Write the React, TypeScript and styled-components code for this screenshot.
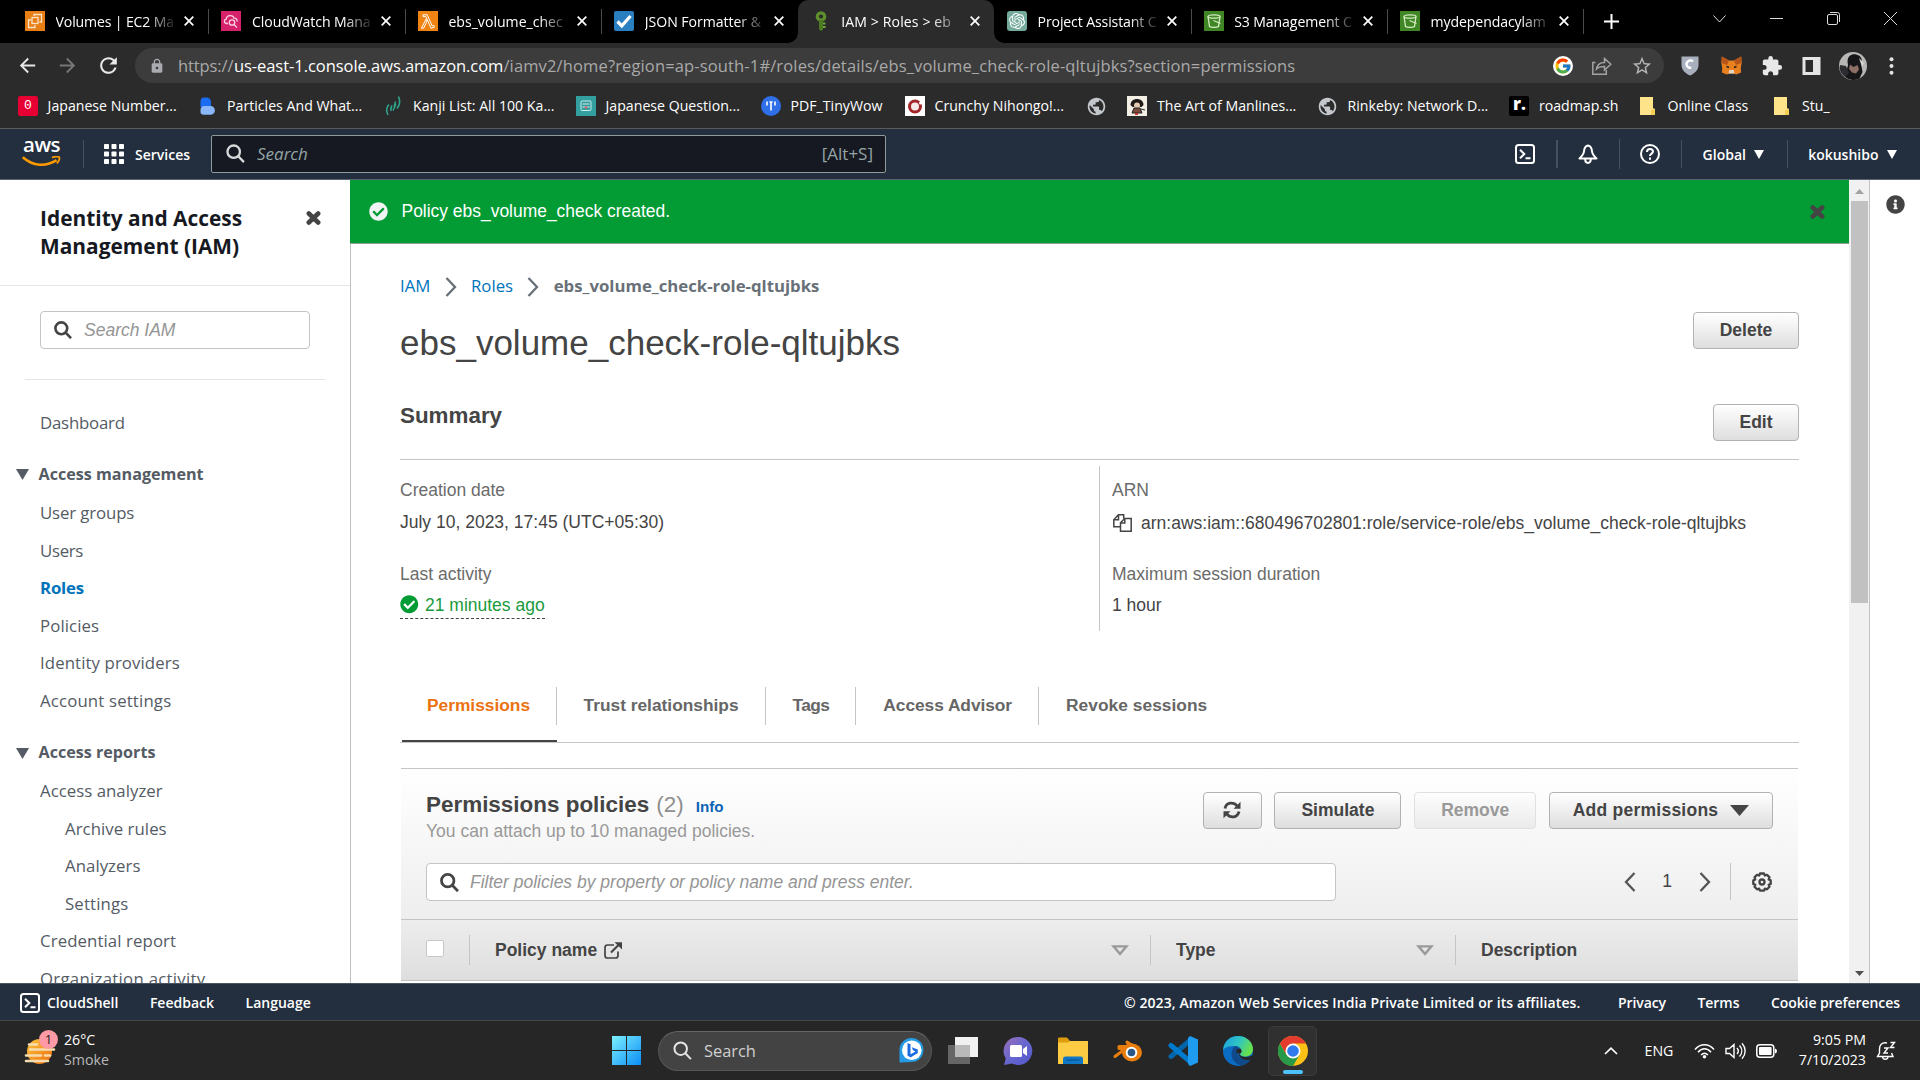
import React from 'react';
import styled, { createGlobalStyle, css } from 'styled-components';
import { FcGoogle } from 'react-icons/fc';
import { SiOpenai } from 'react-icons/si';
import { MdLock, MdArrowBack, MdArrowForward, MdRefresh, MdStarBorder, MdExtension, MdPublic } from 'react-icons/md';
import { FaCheckCircle, FaInfoCircle } from 'react-icons/fa';

const ui = '"Open Sans", "Noto Sans", sans-serif';
const arial = '"Liberation Sans", Arial, sans-serif';

const Global = createGlobalStyle`
  * { box-sizing: border-box; }
  body { margin: 0; background: #fff; overflow: hidden; }
  svg { display: block; flex: none; }
  h1, h2, p { margin: 0; }
`;

const Screen = styled.div`
  width: 1920px;
  height: 1080px;
  display: flex;
  flex-direction: column;
  overflow: hidden;
  font-family: ${ui};
  white-space: nowrap;
`;

/* ---------- Browser chrome ---------- */
const TabStrip = styled.div`
  height: 43px;
  flex: none;
  background: #000;
  display: flex;
  padding-left: 12px;
`;
const Tab = styled.div<{ $active?: boolean; $line?: boolean }>`
  position: relative;
  width: 196.43px;
  height: 43px;
  display: flex;
  align-items: center;
  padding: 0 14px 1px 13px;
  color: #fff;
  font-size: 14.1px;
  ${(p) => p.$line && css`
    &::after { content: ''; position: absolute; right: -1px; top: 9px; width: 1px; height: 25px; background: #4b4b4b; }
  `}
  ${(p) => p.$active && css`
    background: #2b2b2b;
    border-radius: 10px 10px 0 0;
    &::before, &::after { content: ''; position: absolute; bottom: 0; width: 10px; height: 10px; }
    &::before { left: -10px; background: radial-gradient(circle at 0 0, #000 9.5px, #2b2b2b 10px); }
    &::after { right: -10px; background: radial-gradient(circle at 100% 0, #000 9.5px, #2b2b2b 10px); }
  `}
`;
const TabTitle = styled.span<{ $track: number }>`
  width: 119px;
  margin: 0 10px 0 10.6px;
  letter-spacing: ${(p) => p.$track}px;
  mask-image: linear-gradient(90deg, #000 calc(100% - 28px), rgba(0, 0, 0, 0.12) 100%);
`;
const NewTab = styled.div`
  width: 56px;
  display: flex;
  align-items: center;
  justify-content: center;
`;
const WindowButtons = styled.div`
  margin-left: auto;
  display: flex;
  padding: 11px 22px 0 0;
  gap: 42px;
`;
const Toolbar = styled.div`
  height: 41px;
  flex: none;
  background: #2b2b2b;
  padding: 5px 0 1px 16px;
  display: flex;
  align-items: center;
  color: #e8e8e8;
`;
const NavButtons = styled.div`
  width: 119px;
  display: flex;
  gap: 17px;
  align-items: center;
`;
const Omnibox = styled.div`
  width: 1530px;
  height: 35px;
  border-radius: 18px;
  background: #3c3c3c;
  display: flex;
  align-items: center;
  padding: 0 11px 0 14px;
  font-size: 16.5px;
  color: #a9a9a9;
`;
const Url = styled.span`
  margin-left: 13px;
  flex: 1;
  display: flex;
`;
const UrlPart = styled.span<{ $w: number; $track: number; $strong?: boolean }>`
  width: ${(p) => p.$w}px;
  letter-spacing: ${(p) => p.$track}px;
  color: ${(p) => (p.$strong ? '#fff' : '#a9a9a9')};
`;
const OmniActions = styled.div`
  display: flex;
  align-items: center;
  gap: 19px;
`;
const Extensions = styled.div`
  flex: 1;
  display: flex;
  align-items: center;
  padding-left: 16.5px;
`;
const Slot = styled.div<{ $w: number }>`
  width: ${(p) => p.$w}px;
  display: flex;
  justify-content: center;
`;
const Bookmarks = styled.div`
  height: 45px;
  flex: none;
  background: #2b2b2b;
  border-bottom: 1px solid #5b5b5b;
  display: flex;
  align-items: center;
  padding-left: 18px;
  gap: 21px;
  color: #fff;
  font-size: 14.15px;
`;
const Bookmark = styled.div`
  display: flex;
  align-items: center;
  gap: 9.6px;
`;
const BookmarkText = styled.span<{ $w: number }>`
  width: ${(p) => p.$w}px;
  padding-bottom: 1px;
`;

/* ---------- AWS header ---------- */
const AwsHeader = styled.div`
  height: 51px;
  flex: none;
  background: #232f3e;
  border-bottom: 1px solid #5a626d;
  display: flex;
  align-items: center;
  padding: 0 23px 0 22px;
  color: #fff;
  font-size: 14px;
  font-weight: 600;
`;
const Logo = styled.div`
  width: 39px;
  height: 50px;
  margin-right: 22px;
  padding-top: 3px;
  display: flex;
  flex-direction: column;
  align-items: center;
`;
const LogoText = styled.span`
  font-size: 20.5px;
  line-height: 24px;
  letter-spacing: -0.6px;
  font-weight: 600;
`;
const Divider = styled.i<{ $h?: number; $w?: number }>`
  width: ${(p) => p.$w ?? 1}px;
  height: ${(p) => p.$h ?? 28}px;
  background: #46505e;
`;
const ServicesButton = styled.div`
  display: flex;
  align-items: center;
  gap: 11px;
  margin: 0 21px 0 20px;
  span { width: 55px; }
`;
const HeaderSearch = styled.div`
  width: 675px;
  height: 38px;
  border: 1px solid #8d9b9b;
  border-radius: 2px;
  background: #161921;
  display: flex;
  align-items: center;
  padding: 0 12px 2px 14px;
  font-size: 17px;
  font-weight: 400;
  color: #95a5a6;
  em { margin-left: 12px; flex: 1; }
`;
const HeaderRight = styled.div`
  margin-left: auto;
  display: flex;
  align-items: center;
  gap: 20.6px;
`;
const HeaderMenu = styled.span`
  display: flex;
  align-items: center;
  gap: 8.5px;
  &:not(:last-child) { margin-right: 1.5px; }
`;

/* ---------- Page ---------- */
const Page = styled.div`
  height: 803px;
  flex: none;
  display: flex;
  overflow: hidden;
`;
const Sidebar = styled.nav`
  width: 350px;
  flex: none;
  overflow: hidden;
  color: #545b64;
`;
const SideHead = styled.div`
  height: 106px;
  border-bottom: 1px solid #e4e6e6;
  padding: 24px 29px 0 40px;
  display: flex;
  justify-content: space-between;
  color: #16191f;
  font-size: 20.9px;
  font-weight: 700;
  line-height: 28px;
  svg { margin-top: 7px; }
`;
const SideSearchWrap = styled.div`
  margin: 0 25px;
  height: 94px;
  padding: 25px 15px 0;
  border-bottom: 1px solid #e4e6e6;
`;
const Input = styled.div<{ $w: number; $gap: number }>`
  width: ${(p) => p.$w}px;
  height: 38px;
  border: 1px solid #c4c4c4;
  border-radius: 4px;
  background: #fff;
  display: flex;
  align-items: center;
  padding-left: 13px;
  gap: ${(p) => p.$gap}px;
  font: italic 17.5px ${arial};
  color: #959595;
`;
const SideList = styled.div`
  padding-top: 23.5px;
`;
const SideItem = styled.div<{ $track?: number; $indent?: boolean; $active?: boolean }>`
  height: 37.5px;
  line-height: 37.5px;
  padding-left: ${(p) => (p.$indent ? 65 : 40)}px;
  font-size: 16.8px;
  letter-spacing: ${(p) => p.$track ?? 0}px;
  ${(p) => p.$active && css`color: #0073bb; font-weight: 700;`}
`;
const SideSection = styled.div`
  height: 37.5px;
  margin: 14.2px 0 1.5px;
  padding-left: 15.5px;
  display: flex;
  align-items: center;
  gap: 10px;
  font-size: 16.15px;
  font-weight: 700;
  svg { margin-top: 2px; }
`;

const Main = styled.main`
  width: 1499px;
  display: flex;
  flex-direction: column;
`;
const Flash = styled.div`
  height: 64px;
  flex: none;
  background: #029b34;
  border-bottom: 1px solid #8f9d93;
  display: flex;
  align-items: center;
  padding: 0 24px 0 19px;
  font: 17.45px ${arial};
  color: #fff;
  span { flex: 1; margin-left: 13.5px; }
`;
const Body = styled.div`
  flex: 1;
  border-left: 1px solid #bfc1c1;
  padding: 27px 50px 0 49px;
  font-family: ${arial};
  font-size: 17.5px;
  color: #444;
`;
const Breadcrumbs = styled.div`
  height: 30px;
  display: flex;
  align-items: center;
  padding-bottom: 1px;
  font: 16.8px ${ui};
  color: #0073bb;
  svg { margin: 2px 14.3px 0; }
  b { font-weight: 700; font-size: 16.75px; color: #687078; }
`;
const TitleRow = styled.div`
  height: 84px;
  display: flex;
  justify-content: space-between;
`;
const Title = styled.h1`
  font-size: 35px;
  font-weight: 400;
  line-height: 84px;
`;
const SummaryHead = styled.div`
  height: 75px;
  border-bottom: 1px solid #c5c5c5;
  display: flex;
  justify-content: space-between;
`;
const SummaryTitle = styled.h2`
  font-size: 22.4px;
  line-height: 62px;
`;
const Button = styled.div<{ $w: number; $top?: number; $disabled?: boolean; $track?: number }>`
  width: ${(p) => p.$w}px;
  height: 37px;
  margin-top: ${(p) => p.$top ?? 0}px;
  border: 1px solid #b2b2b2;
  border-radius: 4px;
  background: linear-gradient(#fff, #dedede);
  display: flex;
  align-items: center;
  justify-content: center;
  gap: 12px;
  padding-bottom: 1px;
  font-weight: 700;
  letter-spacing: ${(p) => p.$track ?? 0}px;
  color: #444;
  ${(p) => p.$disabled && css`color: #999; border-color: #e0e0e0; background: linear-gradient(#fdfdfd, #ebebeb);`}
`;
const SummaryGrid = styled.div`
  display: grid;
  grid-template-columns: 699px 1fr;
  padding-top: 6px;
`;
const SummaryCol = styled.div<{ $ruled?: boolean }>`
  height: 165px;
  padding-top: 10px;
  ${(p) => p.$ruled && css`border-left: 1px solid #c5c5c5; padding-left: 12px;`}
`;
const Field = styled.div`
  height: 84px;
  line-height: 28px;
`;
const FieldLabel = styled.div`
  color: #6b6b6b;
`;
const FieldValue = styled.div<{ $gap: number }>`
  margin-top: ${(p) => p.$gap}px;
  display: flex;
  align-items: center;
  gap: 9px;
  > svg { margin-left: 1px; }
`;
const Activity = styled.span`
  height: 28px;
  display: flex;
  align-items: center;
  gap: 6.5px;
  color: #1a9a3c;
  border-bottom: 1px dashed #444;
`;
const Tabs = styled.div`
  margin-top: 56px;
  height: 56px;
  border-bottom: 1px solid #c5c5c5;
  display: flex;
`;
const PageTab = styled.div<{ $active?: boolean; $track?: number }>`
  height: 55px;
  border-bottom: 2px solid ${(p) => (p.$active ? '#444' : 'transparent')};
  color: ${(p) => (p.$active ? '#ec7211' : '#666')};
  font-weight: 700;
  font-size: 17.33px;
  letter-spacing: ${(p) => p.$track ?? 0}px;
  span {
    display: block;
    height: 38px;
    line-height: 36px;
    padding: 0 26px 0 27px;
    border-right: 1px solid #c5c5c5;
  }
  &:first-child { margin-left: 1.5px; }
  &:first-child span { padding: 0 25.500px; }
  &:last-child span { border-right: 0; }
`;
const Panel = styled.section`
  margin: 25px 1px 0;
  border-top: 1px solid #c5c5c5;
`;
const PanelHead = styled.div`
  height: 151px;
  padding: 23px 25px 0 25px;
  background: linear-gradient(#fff, #eee);
  border-bottom: 1px solid #c5c5c5;
`;
const PanelTop = styled.div`
  height: 71px;
  display: flex;
  justify-content: space-between;
`;
const PanelTitle = styled.h2`
  font-size: 22.45px;
  line-height: 25px;
  height: 24px;
  i { font-weight: 400; font-style: normal; color: #8f8f8f; margin-left: 7px; }
  small { font-size: 15.2px; color: #0b63b5; margin-left: 12px; }
`;
const PanelSub = styled.p`
  line-height: 30px;
  color: #999;
`;
const ButtonRow = styled.div`
  display: flex;
  gap: 12.8px;
`;
const FilterRow = styled.div`
  display: flex;
  justify-content: space-between;
`;
const Pager = styled.div`
  height: 37px;
  margin-right: 1.5px;
  display: flex;
  align-items: center;
  span { margin: 0 26.500px 0 26px; }
`;
const PagerRule = styled.i`
  width: 1px;
  height: 37px;
  background: #c5c5c5;
  margin: 0 21px 0 19px;
`;
const TableHead = styled.div`
  height: 61px;
  display: grid;
  grid-template-columns: 69px 681px 305px 1fr;
  align-items: center;
  background: linear-gradient(#ededed, #dedede);
  border-bottom: 1px solid #c0c0c0;
  font-weight: 700;
`;
const HeadCell = styled.div`
  height: 30px;
  padding: 0 21px 0 25px;
  display: flex;
  align-items: center;
  gap: 7px;
  border-right: 1px solid #c5c5c5;
  svg.sort { margin-left: auto; }
  &:last-child { border-right: 0; }
`;
const Checkbox = styled.div`
  width: 18px;
  height: 17px;
  margin-bottom: 3px;
  border: 1px solid #c8c8c8;
  border-radius: 2px;
  background: #fff;
`;

const Scrollbar = styled.div`
  width: 20px;
  background: #f1f1f1;
  display: flex;
  flex-direction: column;
  align-items: center;
`;
const ScrollArrow = styled.div`
  height: 21px;
  display: flex;
  align-items: center;
  padding-top: 2px;
`;
const Thumb = styled.div`
  width: 17px;
  height: 402px;
  background: #c1c1c1;
  margin-bottom: auto;
`;
const HelpRail = styled.aside`
  flex: 1;
  border-left: 1px solid #bfc4c4;
  padding: 15px 0 0 15.5px;
  color: #444;
`;

/* ---------- Footer + taskbar ---------- */
const Footer = styled.footer`
  height: 37px;
  flex: none;
  background: #232f3e;
  border-top: 1px solid #4a5460;
  color: #fff;
  font-size: 14px;
  font-weight: 600;
  display: flex;
  align-items: center;
  gap: 31.500px;
  padding: 1px 20px 0;
`;
const FooterShell = styled.span`
  display: flex;
  align-items: center;
  gap: 7px;
`;
const Copyright = styled.span`
  margin: 0 6px 0 auto;
  letter-spacing: 0.1px;
`;
const FooterLink = styled.span`
  letter-spacing: -0.07px;
`;
const Taskbar = styled.div`
  flex: 1;
  background: #262626;
  border-top: 1px solid #464846;
  display: flex;
  align-items: center;
  color: #fff;
  font-size: 14.2px;
`;
const Weather = styled.div`
  width: 612px;
  padding-left: 24px;
  display: flex;
  align-items: center;
  gap: 6px;
  line-height: 20px;
  div { padding-bottom: 2px; }
  p { color: #b8b8b8; }
`;
const TaskIcons = styled.div`
  display: flex;
  align-items: center;
  gap: 25px;
`;
const TaskSearch = styled.div`
  width: 274px;
  height: 40px;
  margin: 0 -9px 0 -8px;
  border-radius: 20px;
  background: #434343;
  border: 1px solid #565656;
  border-top-color: #666;
  display: flex;
  align-items: center;
  padding: 0 7px 0 14px;
  font-size: 16.4px;
  color: #d0d0d0;
  span { flex: 1; margin-left: 12px; }
`;
const RunningApp = styled.div`
  width: 49px;
  height: 50px;
  margin-left: -10px;
  border-radius: 5px;
  background: #303030;
  border: 1px solid #3b3b3b;
  display: flex;
  flex-direction: column;
  align-items: center;
  padding-top: 9px;
  &::after { content: ''; width: 20px; height: 4px; margin-top: 4px; border-radius: 2px; background: #4cc2ff; }
`;
const Tray = styled.div`
  margin-left: auto;
  display: flex;
  align-items: center;
  padding-right: 24px;
  gap: 10px;
`;
const Language = styled(Slot)`
  margin-right: -6px;
  padding-bottom: 1px;
`;
const Clock = styled.div`
  width: 79px;
  padding-bottom: 2px;
  text-align: right;
  line-height: 20px;
`;

/* ---------- Icons ---------- */
const CloseX = () => (
  <svg width="10" height="10" viewBox="0 0 10 10" stroke="#fff" strokeWidth="1.7"><path d="M.7.7l8.6 8.6M9.3.7L.7 9.3" /></svg>
);
const BoldX = () => (
  <svg width="15" height="14" viewBox="0 0 15 14" stroke="#444" strokeWidth="4.6" strokeLinecap="round"><path d="M2.8 2.5l9.4 9M12.2 2.5l-9.4 9" /></svg>
);
const Lens = ({ color = '#444', size = 18, w = 2.6 }: { color?: string; size?: number; w?: number }) => (
  <svg width={size} height={size} viewBox="0 0 18 18" fill="none" stroke={color} strokeWidth={w}><circle cx="7.3" cy="7.3" r="5.9" /><path d="M11.4 11.4l5.6 5.8" /></svg>
);
const Down = ({ w, h, color }: { w: number; h: number; color: string }) => (
  <svg width={w} height={h} viewBox="0 0 10 10" preserveAspectRatio="none"><path d="M0 0h10L5 10z" fill={color} /></svg>
);
const Chevron = ({ flip, color = '#687078', w = 12 }: { flip?: boolean; color?: string; w?: number }) => (
  <svg width={w} height="20" viewBox="0 0 12 20" fill="none" stroke={color} strokeWidth="2.3"><path d={flip ? 'M10.5 1L2 10l8.5 9' : 'M1.5 1L10 10l-8.5 9'} /></svg>
);
const Sort = () => (
  <svg className="sort" width="18" height="11" viewBox="0 0 18 11" fill="none" stroke="#999" strokeWidth="2.4"><path d="M2.5 1.4h13L9 9z" /></svg>
);
const Shell = () => (
  <svg width="20" height="20" viewBox="0 0 20 20" fill="none" stroke="#fff" strokeWidth="2"><rect x="1" y="1" width="18" height="18" rx="2.5" /><path d="M5 5.8l4.3 4.2L5 14.2M10.5 14.2h5" /></svg>
);
const Bell = () => (
  <svg width="20" height="20" viewBox="0 0 20 20" fill="none" stroke="#fff" strokeWidth="2" strokeLinejoin="round"><path d="M10 1.5c-2.6.6-3.8 2.6-4 5.8C5.800 10.200 4.500 11.600 1.500 14.500h17c-3-2.900-4.300-4.300-4.500-7.200-.2-3.200-1.400-5.200-4-5.800zM7.200 15.500c0 4.500 5.600 4.500 5.600 0" /></svg>
);
const HelpIcon = () => (
  <svg width="20" height="20" viewBox="0 0 20 20" fill="none" stroke="#fff" strokeWidth="2"><circle cx="10" cy="10" r="9" /><path d="M7 8c0-4 6-3.800 6-.5 0 2.200-3 2-3 4.500M10 13.500v2.200" /></svg>
);
const Grid9 = () => (
  <svg width="20" height="20" viewBox="0 0 20 20" fill="#fff">
    {[0, 7.5, 15].map((y) => [0, 7.5, 15].map((x) => <rect key={`${x}${y}`} x={x} y={y} width="5" height="5" rx=".8" />))}
  </svg>
);
const Smile = () => (
  <svg width="39" height="11" viewBox="0 0 39 11" fill="none" stroke="#ff9900" strokeWidth="2.6"><path d="M.8 1.200C11 10.500 24 11 34.500 4.200" /><path d="M30 1.600c3-1.200 6.500-1.200 7.200-.4.700 1-.2 4-2.400 6.300" strokeWidth="1.800" /></svg>
);
const Copy = () => (
  <svg width="19" height="18" viewBox="0 0 19 18" fill="none" stroke="#444" strokeWidth="1.500"><path d="M7.500 12.800H.8V5.800L5.500.8h5.200v3.600M.8 5.800h4.700v-5M7.500 8.700l4.200-4.300h6.500v12.800H7.500zM7.500 8.900h4.300V4.600" /></svg>
);
const Refresh = () => (
  <svg width="18" height="18" viewBox="0 0 18 18" fill="none" stroke="#444" strokeWidth="2.800"><path d="M2 7.500C3.200 1.200 10.500.5 14 4.800M16 10.500C14.800 16.800 7.500 17.500 4 13.200" /><path d="M17.500.8v7h-7zM.5 17.200v-7h7z" fill="#444" stroke="none" /></svg>
);
const External = () => (
  <svg width="18" height="17" viewBox="0 0 18 17" fill="none" stroke="#444" strokeWidth="1.700"><path d="M10 3H3.500Q1 3 1 5.500v8Q1 16 3.500 16h8q2.500 0 2.500-2.500V9.500" /><path d="M7 10.500L15 2.500" strokeWidth="2.200" /><path d="M10.500.2H18v7.300z" fill="#444" stroke="none" /></svg>
);
const Gear = () => (
  <svg width="20" height="20" viewBox="0 0 20 20" fill="none" stroke="#444" strokeWidth="2.300" strokeLinejoin="round"><circle cx="10" cy="10" r="2.500" /><path d="M8 1.500h4l.8 2 2.200-.7 2.500 2.600-.8 2 2 .9v3.600l-2 .9.800 2-2.500 2.500-2.200-.6-.8 1.900H8l-.8-1.900-2.200.6-2.500-2.500.8-2-2-.9V8.300l2-.9-.8-2L5 2.800l2.200.7z" /></svg>
);

const Ec2 = () => (
  <svg width="20" height="20" viewBox="0 0 20 20"><rect width="20" height="20" fill="#e87f15" /><g fill="none" stroke="#fbe3c8" strokeWidth="1.300"><rect x="7" y="6.500" width="6" height="6" /><path d="M6 9H3.500v7.500H10V14M9 5V3.500h7.500V11H14.500" /></g></svg>
);
const CloudWatch = () => (
  <svg width="20" height="20" viewBox="0 0 20 20"><rect width="20" height="20" fill="#d5226b" /><g fill="none" stroke="#fbd2e2" strokeWidth="1.300"><path d="M7 12.500H5.500c-3-.3-2.500-4-.3-4.300.5-4.700 7-4.500 7.800-1 2-.2 3.500 1.300 3 3.500" /><circle cx="11" cy="11.500" r="2.700" /><path d="M13 13.500l3 3" /></g></svg>
);
const Lambda = () => (
  <svg width="20" height="20" viewBox="0 0 20 20"><rect width="20" height="20" fill="#f08412" /><path d="M5 3.800h4.200l5 11.200 1.600-.6.700 1.700-3.400 1.200L7.800 5.600H5zM7.900 8.300l1 2.200-3.300 6.700H3.500z" fill="none" stroke="#fff" strokeWidth="1" /></svg>
);
const JsonFav = () => (
  <svg width="20" height="20" viewBox="0 0 20 20"><rect width="20" height="20" rx="2" fill="#2a7fc0" /><path d="M3.500 10.500l4.300 4.300L16.500 5" fill="none" stroke="#fff" strokeWidth="3.200" /></svg>
);
const IamKey = () => (
  <svg width="20" height="20" viewBox="0 0 20 20"><circle cx="10" cy="5.500" r="3.700" fill="none" stroke="#5e8f2c" strokeWidth="3.200" /><path d="M8 9h4v9.500L10 20l-2-1.500z" fill="#4b7a22" /><path d="M12 11.500h2.500v2H12zM12 15h2.500v2H12z" fill="#6fa53a" /></svg>
);
const GptWrap = styled.div`
  width: 20px;
  height: 20px;
  border-radius: 3px;
  background: #74aa9c;
  color: #fff;
  display: flex;
  align-items: center;
  justify-content: center;
`;
const S3 = () => (
  <svg width="20" height="20" viewBox="0 0 20 20"><rect width="20" height="20" fill="#3f8624" /><g fill="none" stroke="#d6ecc4" strokeWidth="1.300"><ellipse cx="10" cy="5.500" rx="6" ry="1.700" /><path d="M4 5.500L5.500 15.500c1.500 1.300 7.500 1.300 9 0L16 5.500M9.500 9.500l7 3" /></g></svg>
);
const Square = styled.div<{ $bg: string }>`
  width: 20px;
  height: 20px;
  border-radius: 2px;
  background: ${(p) => p.$bg};
  color: #fff;
  font: 13px/20px "Liberation Mono", monospace;
  text-align: center;
`;
const RoadmapMark = styled(Square)`
  font: 800 17px/16px ${ui};
`;
const Brilliant = () => (
  <svg width="20" height="20" viewBox="0 0 20 20"><path d="M3.500 11V5.500a4 4 0 0 1 4-4h2a4.500 4.500 0 0 1 4.500 4.500V11z" fill="#1a6cf5" /><path d="M3.500 14a4 4 0 0 1 4-4h6a4.400 4.400 0 0 1 0 8.800H6.500A3 3 0 0 1 3.500 16z" fill="#8ab6fb" /></svg>
);
const Waves = () => (
  <svg width="20" height="20" viewBox="0 0 20 20" fill="none" stroke="#2fa38b" strokeWidth="1.600"><path d="M5 19C3 15 3.500 11 6 8.500M8 15c-.6-2 0-4 1-5.500M11.500 11.500c1-2 1.200-4 .5-6M14 12.500c2.500-3 3.200-8 1.500-12M10 14.500c1.500-2 2-4.500 1.500-6.500" /></svg>
);
const JpQuiz = () => (
  <svg width="20" height="20" viewBox="0 0 20 20"><rect width="20" height="20" fill="#339f9f" /><rect x="5" y="5" width="10" height="9.500" rx="1" fill="none" stroke="#c8ecec" /><path d="M6.500 8h7M6.500 11h7" stroke="#d7e8ea" /><circle cx="10" cy="11.500" r="1.300" fill="#e2566a" /></svg>
);
const TinyWow = () => (
  <svg width="20" height="20" viewBox="0 0 20 20"><circle cx="10" cy="10" r="10" fill="#2f6fe8" /><path d="M6 5.500v4M10 5.500v9M14 5.500v4M8.500 6h3" stroke="#fff" strokeWidth="1.600" /></svg>
);
const Crunchy = () => (
  <svg width="20" height="20" viewBox="0 0 20 20"><rect width="20" height="20" fill="#fff" /><circle cx="10" cy="10.500" r="5.500" fill="#f7e9e9" stroke="#a3262c" strokeWidth="3" /><circle cx="15.500" cy="7" r="1.500" fill="#fff" /></svg>
);
const Manly = () => (
  <svg width="20" height="20" viewBox="0 0 20 20"><rect width="20" height="20" fill="#f4efe4" /><path d="M3.500 9c0-8 13-8 13 0l-2 2h-9z" fill="#1f1a18" /><circle cx="10" cy="9.500" r="3" fill="#e3c9ae" /><path d="M5 17l2-5h6l2 5zM14 13l4 1" fill="#7a4a3a" stroke="#222" /><path d="M8 18h3" stroke="#c33" strokeWidth="2" /></svg>
);
const Folder = () => (
  <svg width="20" height="20" viewBox="0 0 20 20"><path d="M2 1h13v11l2 1v6H2z" fill="#ffe38a" /><path d="M13 19v-4.500l2-1.500 2 .5V19z" fill="#f3cd54" /></svg>
);
const Shield = () => (
  <svg width="18" height="20" viewBox="0 0 18 20"><path d="M.5.5h17V9c0 5-4 8.500-8.500 10.500C4.500 17.500.5 14 .5 9z" fill="#a9b0bd" /><path d="M12 5.200C8.500 3 4.800 6 5.600 9c.6 2.300 3 3 4.600 2.600" fill="none" stroke="#fff" strokeWidth="2.400" /></svg>
);
const Fox = () => (
  <svg width="21" height="19" viewBox="0 0 21 19"><path d="M.8.500L8 4.500h5L20.200.500l.5 6-1 6 .5 4-5 2-2.700-1H8.500l-2.700 1-5-2 .500-4-1-6z" fill="#e8801f" /><path d="M.8.500L8 4.500 6 9 .8 7zM20.200.500L13 4.500 15 9l5.200-2z" fill="#b5551a" /><path d="M8.300 14h4.400l.8 3.500h-6z" fill="#e6d3c0" /><path d="M5.500 10.500l2.500 1M15.500 10.500l-2.500 1" stroke="#222" strokeWidth="1.400" /></svg>
);
const SidePanelIcon = () => (
  <svg width="19" height="18" viewBox="0 0 19 18"><path fillRule="evenodd" d="M.5 0h18v18H.5zM3.500 3v12h7.500V3z" fill="#e4e4e4" /></svg>
);
const Avatar = () => (
  <svg width="28" height="28" viewBox="0 0 28 28"><circle cx="14" cy="14" r="14" fill="#b9b7b6" /><path d="M9 13C7 5 12 1.500 17 2.500c6 1 7 7 5.500 11.500l1 6-3 6.500A14 14 0 0 1 6 25l2-8z" fill="#161518" /><path d="M11 12.500l3.500 2.500 4-2 1.500 4.500-3 4-4-1-3-3.500z" fill="#8e6f66" /><path d="M1 13l6 1 3 7-4 4A14 14 0 0 1 .5 16z" fill="#2b2b30" /><path d="M20 6l5 5-2 4z" fill="#d8d6d5" /></svg>
);
const Share = () => (
  <svg width="20" height="18" viewBox="0 0 20 18" fill="none" stroke="#a3a3a3" strokeWidth="1.500"><path d="M3.500 5.500H.8V17.200h13.500V13" /><path d="M4.500 12c.8-4.500 4-6.500 8-6.500V1.500l6.300 5.800-6.300 5.700V9.500C9 9.500 6.500 10 4.500 12z" /></svg>
);
const SmokeIcon = () => (
  <svg width="34" height="42" viewBox="0 0 34 42"><defs><linearGradient id="sun" x1="0" y1="0" x2="1" y2="1"><stop offset="0" stopColor="#fdc63a" /><stop offset="1" stopColor="#ee6c10" /></linearGradient></defs><circle cx="15.500" cy="21.500" r="12.500" fill="url(#sun)" /><path d="M5 14.500h8M6 19.500h24M2 25.500h15M21 25.500h5M2 31h22" stroke="#f6dcae" strokeWidth="2.600" strokeLinecap="round" /><circle cx="24.500" cy="9.500" r="9.500" fill="#fd9aa5" /><text x="24.500" y="14" fontSize="13" textAnchor="middle" fill="#222" fontFamily="Open Sans">1</text></svg>
);
const WinLogo = () => (
  <svg width="29" height="29" viewBox="0 0 29 29"><defs><linearGradient id="win" gradientUnits="userSpaceOnUse" x1="0" y1="0" x2="29" y2="29"><stop offset="0" stopColor="#7df0ff" /><stop offset="1" stopColor="#0a8df5" /></linearGradient></defs><path d="M0 0h14v14H0zM15 0h14v14H15zM0 15h14v14H0zM15 15h14v14H15z" fill="url(#win)" /></svg>
);
const Bing = () => (
  <svg width="25" height="25" viewBox="0 0 25 25"><path d="M.5 24.500V12.500A12 12 0 1 1 12.500 24z" fill="#249be4" /><circle cx="12.800" cy="12.200" r="9.800" fill="#fff" /><path d="M8.500 5l3 1.200v10l5-2.800-2.500-1.200-1.200-3 6 2.200v3.500l-7.300 4.500-3-2z" fill="#1b6ce0" /></svg>
);
const TaskView = () => (
  <svg width="30" height="30" viewBox="0 0 30 30"><rect x="0" y="9" width="22" height="19" fill="#666" /><rect x="7" y="1" width="23" height="20" fill="#f1f1f1" /><path d="M7 9h15v12H7z" fill="#b9b9b9" /></svg>
);
const Chat = () => (
  <svg width="30" height="30" viewBox="0 0 30 30"><defs><linearGradient id="chat" x1="0" y1="0" x2="1" y2="1"><stop offset="0" stopColor="#9a6fb8" /><stop offset=".5" stopColor="#6767cf" /><stop offset="1" stopColor="#5257c8" /></linearGradient></defs><path d="M15 1a14 14 0 1 1-6 26.500L1 29l1.800-6.500A14 14 0 0 1 15 1z" fill="url(#chat)" /><rect x="7" y="9" width="12" height="12" rx="1.500" fill="#fff" /><path d="M20 13l4-3v10l-4-3z" fill="#fff" /></svg>
);
const Explorer = () => (
  <svg width="30" height="28" viewBox="0 0 30 28"><path d="M0 1.500Q0 .500 1 .500h8l3 3.500V8H0z" fill="#dd9c0c" /><path d="M0 5.500h10l2-1.500h18v23H0z" fill="#fdcc42" /><path d="M5 27v-5q0-2.500 2.500-2.500h15q2.500 0 2.500 2.500v5z" fill="#0f77c4" /><path d="M8.500 23h13" stroke="#0b4f8b" /></svg>
);
const Blender = () => (
  <svg width="30" height="26" viewBox="0 0 30 26"><path d="M2 18.500L12.500 10.500H6V8.500h10L14 4 22 9" fill="none" stroke="#e87d0d" strokeWidth="3" strokeLinejoin="round" strokeLinecap="round" /><ellipse cx="19" cy="14.500" rx="10" ry="9" fill="#e87d0d" /><circle cx="18.500" cy="14.500" r="5.800" fill="#fff" /><circle cx="18.500" cy="14.500" r="3.800" fill="#265787" /></svg>
);
const VsCode = () => (
  <svg width="30" height="30" viewBox="0 0 30 30"><path d="M3 20.500L22 4.500" stroke="#0065a9" strokeWidth="5" strokeLinecap="round" /><path d="M3 9.500L22 25.500" stroke="#007acc" strokeWidth="5" strokeLinecap="round" /><path d="M22 0l8 3.500v23L22 30l-2-2V2z" fill="#1f9cf0" /></svg>
);
const Edge = () => (
  <svg width="30" height="30" viewBox="0 0 30 30"><defs><linearGradient id="eg" x1="0" y1="0" x2="1" y2=".4"><stop offset="0" stopColor="#1b9de2" /><stop offset=".55" stopColor="#2fc4c4" /><stop offset="1" stopColor="#66e04f" /></linearGradient></defs><circle cx="15" cy="15" r="15" fill="#0b6cc4" /><path d="M0 14C1 5 7 0 15 0c9 0 15 6.500 15 13 0 5-3.500 7.500-8 7.500-4 0-5.500-1.700-4.500-3.500 2-4-1-7-4.500-7C7.500 9.500 2 11 0 14z" fill="url(#eg)" /><path d="M13 10c-6 1.500-7.500 17 6 19.500 4-.8 7-3.500 9-7.500-7 3.500-13.500 0-13.500-5.500 0-2 1-3 1-3.500C15 11.500 14 10.500 13 10z" fill="#114a8b" /><circle cx="16" cy="15" r="2.600" fill="#262626" /><path d="M16 17c1 4 6 5.500 13 2.500l2 .5-2.500 3C22 25.500 15.500 22.500 15.500 17z" fill="#262626" /></svg>
);
const ChromeIcon = () => (
  <svg width="30" height="30" viewBox="0 0 30 30"><circle cx="15" cy="15" r="15" fill="#fbc116" /><path d="M15 15L8.500 18.800 2 7.500A15 15 0 0 0 15 30l6.500-11.200z" fill="#269a48" /><path d="M2 7.500A15 15 0 0 1 28 7.500H15L8.500 18.800z" fill="#e33b2e" /><circle cx="15" cy="15" r="7.500" fill="#fff" /><circle cx="15" cy="15" r="5.800" fill="#2f7bee" /></svg>
);
const Globe = () => (
  <Slot $w={20}><MdPublic size={21} color="#c3c7cb" /></Slot>
);

const browserTabs = [
  { icon: <Ec2 />, title: 'Volumes | EC2 Ma', k: -0.15, line: true },
  { icon: <CloudWatch />, title: 'CloudWatch Mana', k: -0.1, line: true },
  { icon: <Lambda />, title: 'ebs_volume_chec', k: 0, line: true },
  { icon: <JsonFav />, title: 'JSON Formatter &', k: -0.05 },
  { icon: <IamKey />, title: 'IAM > Roles > eb', k: 0.1, active: true },
  { icon: <GptWrap><SiOpenai size={16} /></GptWrap>, title: 'Project Assistant C', k: -0.12, line: true },
  { icon: <S3 />, title: 'S3 Management C', k: -0.1, line: true },
  { icon: <S3 />, title: 'mydependacylam', k: -0.1, line: true },
];
const bookmarks: { icon: React.ReactNode; text?: string; w?: number }[] = [
  { icon: <Square $bg="#e60033">0</Square>, text: 'Japanese Number...', w: 129 },
  { icon: <Brilliant />, text: 'Particles And What...', w: 135.5 },
  { icon: <Waves />, text: 'Kanji List: All 100 Ka...', w: 142 },
  { icon: <JpQuiz />, text: 'Japanese Question...', w: 134.5 },
  { icon: <TinyWow />, text: 'PDF_TinyWow', w: 93.5 },
  { icon: <Crunchy />, text: 'Crunchy Nihongo!...', w: 131 },
  { icon: <Globe /> },
  { icon: <Manly />, text: 'The Art of Manlines...', w: 140 },
  { icon: <Globe />, text: 'Rinkeby: Network D...', w: 141 },
  { icon: <RoadmapMark $bg="#000">r.</RoadmapMark>, text: 'roadmap.sh', w: 78 },
  { icon: <Folder />, text: 'Online Class', w: 84 },
  { icon: <Folder />, text: 'Stu_', w: 28 },
];
const managementLinks = [
  { t: 'User groups', k: -0.12 },
  { t: 'Users', k: -0.3 },
  { t: 'Roles', k: -0.2, active: true },
  { t: 'Policies', k: 0.1 },
  { t: 'Identity providers', k: 0.1 },
  { t: 'Account settings', k: 0.16 },
];
const reportLinks = [
  { t: 'Access analyzer', k: 0.03 },
  { t: 'Archive rules', k: 0.05, indent: true },
  { t: 'Analyzers', k: 0.05, indent: true },
  { t: 'Settings', k: 0.15, indent: true },
  { t: 'Credential report', k: 0.1 },
  { t: 'Organization activity', k: 0.28 },
];

export default function App() {
  return (
    <Screen>
      <Global />
      <TabStrip>
        {browserTabs.map((t) => (
          <Tab key={t.title} $active={t.active} $line={t.line}>
            {t.icon}
            <TabTitle $track={t.k}>{t.title}</TabTitle>
            <CloseX />
          </Tab>
        ))}
        <NewTab>
          <svg width="15" height="15" viewBox="0 0 15 15" stroke="#fff" strokeWidth="2"><path d="M7.500 0v15M0 7.500h15" /></svg>
        </NewTab>
        <WindowButtons>
          <svg width="15" height="15" viewBox="0 0 15 15" fill="none" stroke="#ddd"><path d="M1.500 4.500l6 6.500 6-6.500" /></svg>
          <svg width="15" height="15" viewBox="0 0 15 15" stroke="#ddd"><path d="M1 7.500h13" /></svg>
          <svg width="15" height="15" viewBox="0 0 15 15" fill="none" stroke="#ddd"><rect x="1.500" y="3.500" width="10" height="10" rx="1.500" /><path d="M4 1.500h7.500q2 0 2 2V11" /></svg>
          <svg width="15" height="15" viewBox="0 0 15 15" stroke="#ddd"><path d="M1 1l13 13M14 1L1 14" /></svg>
        </WindowButtons>
      </TabStrip>
      <Toolbar>
        <NavButtons>
          <MdArrowBack size={23} />
          <MdArrowForward size={23} color="#777" />
          <MdRefresh size={25} />
        </NavButtons>
        <Omnibox>
          <MdLock size={16} color="#a9abae" />
          <Url>
            <UrlPart $w={56} $track={-0.1}>https://</UrlPart>
            <UrlPart $w={269.500} $track={-0.05} $strong>us-east-1.console.aws.amazon.com</UrlPart>
            <UrlPart $w={800} $track={0.14}>/iamv2/home?region=ap-south-1#/roles/details/ebs_volume_check-role-qltujbks?section=permissions</UrlPart>
          </Url>
          <OmniActions>
            <svg width="20" height="20" viewBox="0 0 20 20"><circle cx="10" cy="10" r="10" fill="#fff" /><FcGoogle x="1" y="1" size={18} /></svg>
            <Share />
            <MdStarBorder size={22} color="#b5b5b5" />
          </OmniActions>
        </Omnibox>
        <Extensions>
          <Slot $w={20}><Shield /></Slot>
          <Slot $w={63}><Fox /></Slot>
          <Slot $w={18}><MdExtension size={22} /></Slot>
          <Slot $w={61}><SidePanelIcon /></Slot>
          <Slot $w={21}><Avatar /></Slot>
          <Slot $w={57}>
            <svg width="5" height="18" viewBox="0 0 5 18" fill="#e4e4e4"><circle cx="2.500" cy="2.200" r="2" /><circle cx="2.500" cy="9" r="2" /><circle cx="2.500" cy="15.800" r="2" /></svg>
          </Slot>
        </Extensions>
      </Toolbar>
      <Bookmarks>
        {bookmarks.map((b, i) => (
          <Bookmark key={i}>
            {b.icon}
            {b.text && <BookmarkText $w={b.w! - 0.100}>{b.text}</BookmarkText>}
          </Bookmark>
        ))}
      </Bookmarks>

      <AwsHeader>
        <Logo><LogoText>aws</LogoText><Smile /></Logo>
        <Divider />
        <ServicesButton><Grid9 /><span>Services</span></ServicesButton>
        <HeaderSearch>
          <Lens color="#d5dbdb" size={19} w={2.2} />
          <em>Search</em>
          <span>[Alt+S]</span>
        </HeaderSearch>
        <HeaderRight>
          <Shell />
          <Divider $w={2} />
          <Bell />
          <Divider $h={30} />
          <HelpIcon />
          <Divider />
          <HeaderMenu>Global<Down w={10} h={9} color="#fff" /></HeaderMenu>
          <Divider />
          <HeaderMenu>kokushibo<Down w={10} h={9} color="#fff" /></HeaderMenu>
        </HeaderRight>
      </AwsHeader>

      <Page>
        <Sidebar>
          <SideHead>
            <div>Identity and Access<br />Management (IAM)</div>
            <BoldX />
          </SideHead>
          <SideSearchWrap>
            <Input $w={270} $gap={12}><Lens />Search IAM</Input>
          </SideSearchWrap>
          <SideList>
            <SideItem $track={-0.2}>Dashboard</SideItem>
            <SideSection><Down w={13} h={11} color="#545b64" />Access management</SideSection>
            {managementLinks.map((l) => <SideItem key={l.t} $track={l.k} $active={l.active}>{l.t}</SideItem>)}
            <SideSection><Down w={13} h={11} color="#545b64" />Access reports</SideSection>
            {reportLinks.map((l) => <SideItem key={l.t} $track={l.k} $indent={l.indent}>{l.t}</SideItem>)}
          </SideList>
        </Sidebar>

        <Main>
          <Flash>
            <FaCheckCircle size={19} color="#f2f3f3" />
            <span>Policy ebs_volume_check created.</span>
            <BoldX />
          </Flash>
          <Body>
            <Breadcrumbs>IAM<Chevron />Roles<Chevron /><b>ebs_volume_check-role-qltujbks</b></Breadcrumbs>
            <TitleRow>
              <Title>ebs_volume_check-role-qltujbks</Title>
              <Button $w={106} $top={11}>Delete</Button>
            </TitleRow>
            <SummaryHead>
              <SummaryTitle>Summary</SummaryTitle>
              <Button $w={86} $top={19}>Edit</Button>
            </SummaryHead>
            <SummaryGrid>
              <SummaryCol>
                <Field>
                  <FieldLabel>Creation date</FieldLabel>
                  <FieldValue $gap={4}>July 10, 2023, 17:45 (UTC+05:30)</FieldValue>
                </Field>
                <Field>
                  <FieldLabel>Last activity</FieldLabel>
                  <FieldValue $gap={3}><Activity><FaCheckCircle size={18.500} color="#029b34" />21 minutes ago</Activity></FieldValue>
                </Field>
              </SummaryCol>
              <SummaryCol $ruled>
                <Field>
                  <FieldLabel>ARN</FieldLabel>
                  <FieldValue $gap={4.500}><Copy />arn:aws:iam::680496702801:role/service-role/ebs_volume_check-role-qltujbks</FieldValue>
                </Field>
                <Field>
                  <FieldLabel>Maximum session duration</FieldLabel>
                  <FieldValue $gap={3}>1 hour</FieldValue>
                </Field>
              </SummaryCol>
            </SummaryGrid>
            <Tabs>
              <PageTab $active><span>Permissions</span></PageTab>
              <PageTab><span>Trust relationships</span></PageTab>
              <PageTab $track={-0.6}><span>Tags</span></PageTab>
              <PageTab $track={-0.05}><span>Access Advisor</span></PageTab>
              <PageTab $track={0.04}><span>Revoke sessions</span></PageTab>
            </Tabs>
            <Panel>
              <PanelHead>
                <PanelTop>
                  <div>
                    <PanelTitle>Permissions policies<i>(2)</i><small>Info</small></PanelTitle>
                    <PanelSub>You can attach up to 10 managed policies.</PanelSub>
                  </div>
                  <ButtonRow>
                    <Button $w={59}><Refresh /></Button>
                    <Button $w={127}>Simulate</Button>
                    <Button $w={122} $disabled>Remove</Button>
                    <Button $w={224} $track={0.25}>Add permissions<Down w={19} h={11} color="#444" /></Button>
                  </ButtonRow>
                </PanelTop>
                <FilterRow>
                  <Input $w={910} $gap={11}><Lens size={19} />Filter policies by property or policy name and press enter.</Input>
                  <Pager>
                    <Chevron flip color="#555" /><span>1</span><Chevron color="#555" />
                    <PagerRule />
                    <Gear />
                  </Pager>
                </FilterRow>
              </PanelHead>
              <TableHead>
                <HeadCell><Checkbox /></HeadCell>
                <HeadCell>Policy name<External /><Sort /></HeadCell>
                <HeadCell>Type<Sort /></HeadCell>
                <HeadCell>Description</HeadCell>
              </TableHead>
            </Panel>
          </Body>
        </Main>
        <Scrollbar>
          <ScrollArrow><svg width="9" height="5" viewBox="0 0 9 5"><path d="M0 5L4.500 0 9 5z" fill="#a3a3a3" /></svg></ScrollArrow>
          <Thumb />
          <ScrollArrow><Down w={9} h={5} color="#505050" /></ScrollArrow>
        </Scrollbar>
        <HelpRail><FaInfoCircle size={19} /></HelpRail>
      </Page>

      <Footer>
        <FooterShell><Shell />CloudShell</FooterShell>
        <span>Feedback</span>
        <span>Language</span>
        <Copyright>© 2023, Amazon Web Services India Private Limited or its affiliates.</Copyright>
        <FooterLink>Privacy</FooterLink>
        <FooterLink>Terms</FooterLink>
        <FooterLink>Cookie preferences</FooterLink>
      </Footer>
      <Taskbar>
        <Weather>
          <SmokeIcon />
          <div>26°C<p>Smoke</p></div>
        </Weather>
        <TaskIcons>
          <WinLogo />
          <TaskSearch><Lens color="#e3e3e3" size={19} w={1.9} /><span>Search</span><Bing /></TaskSearch>
          <TaskView />
          <Chat />
          <Explorer />
          <Blender />
          <VsCode />
          <Edge />
          <RunningApp><ChromeIcon /></RunningApp>
        </TaskIcons>
        <Tray>
          <svg width="14" height="8" viewBox="0 0 14 8" fill="none" stroke="#fff" strokeWidth="1.700"><path d="M1 7l6-5.800L13 7" /></svg>
          <Language $w={62}>ENG</Language>
          <svg width="21" height="16" viewBox="0 0 21 16" fill="none" stroke="#fff" strokeWidth="1.500"><path d="M1 6.500c5.500-6.300 13.500-6.300 19 0M4 9.200c4-4.500 9-4.500 13 0M7 12c2.300-2.300 4.700-2.300 7 0" /><circle cx="10.500" cy="13.800" r="1.800" fill="#fff" stroke="none" /></svg>
          <svg width="21" height="18" viewBox="0 0 21 18" fill="none" stroke="#fff" strokeWidth="1.400"><path d="M1 6.500h3.500L9 2.500v13l-4.500-4H1zM12 6c1.600 1.800 1.600 4.200 0 6M14.500 3.500c3 3.300 3 7.700 0 11M17 1.200c4.200 4.700 4.200 10.900 0 15.600" /></svg>
          <svg width="21" height="14" viewBox="0 0 21 14"><rect x=".8" y=".8" width="17" height="12.400" rx="3" fill="none" stroke="#fff" strokeWidth="1.500" /><rect x="3" y="3" width="12.600" height="8" rx="1" fill="#fff" /><path d="M19 4.500q2 .5 2 2.500t-2 2.500z" fill="#fff" /></svg>
          <Clock>9:05 PM<br />7/10/2023</Clock>
          <svg width="20" height="20" viewBox="0 0 20 20" fill="none" stroke="#fff" strokeWidth="1.400"><path d="M11 2C5.500 1 3.500 4.500 3.500 8v4L1.500 15.500h15.500L15.500 12M6.500 16c.5 3 5 3 5.500 0M8 7h4l-4 5h4M14.500 1.500h4l-4 5h4" /></svg>
        </Tray>
      </Taskbar>
    </Screen>
  );
}
